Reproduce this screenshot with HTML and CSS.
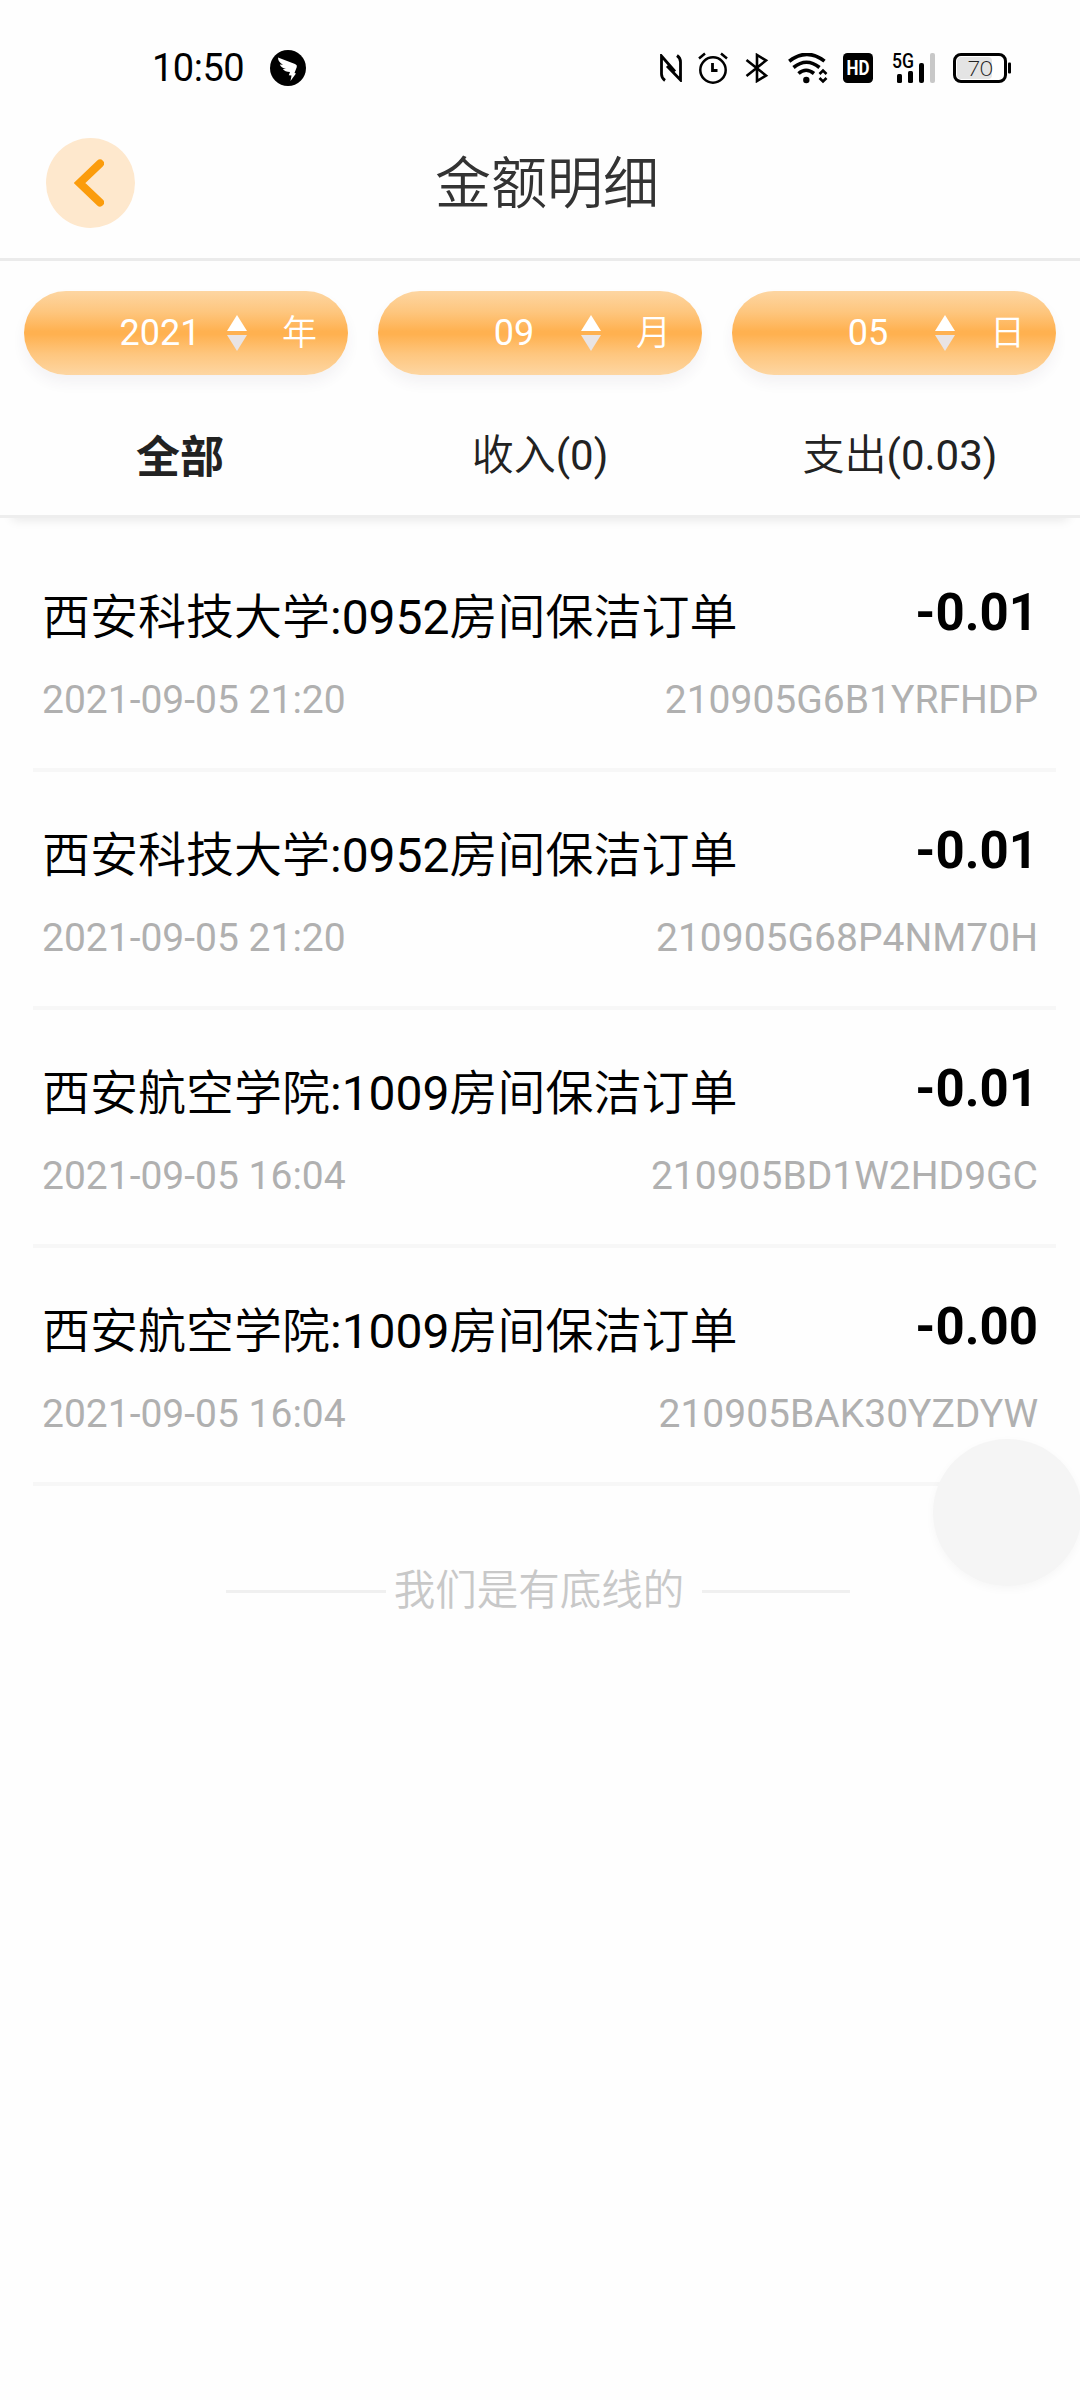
FILE: index.html
```html
<!DOCTYPE html>
<html lang="zh-CN">
<head>
<meta charset="utf-8">
<title>金额明细</title>
<link rel="stylesheet" href="styles.css">
</head>
<body>
<div class="status">
  <div class="status-left">
    <span class="clock">10:50</span>
    <svg class="app-badge" viewBox="0 0 36 36"><circle cx="18" cy="18" r="18"/><path fill="#fff" d="M8 7.500L25 14Q27.500 15 26.800 17L24.500 23L26 23.500L20.500 31L21.500 25.500L18.800 25.200L20 22Q15 22 12.800 19L16 19Q11 17.500 9.800 14.500L13 14.800Q8 12 8 7.500Z"/></svg>
  </div>
  <div class="status-right">
    <svg class="nfc" viewBox="0 0 22 28" fill="none" stroke="#000" stroke-width="2.800"><path d="M5 26.500Q1.500 24 1.500 20V2L15 17.500M17 1.500Q20.500 4 20.500 8V26L7 12"/></svg>
    <svg class="alarm" viewBox="0 0 30 32" fill="none" stroke="#000" stroke-width="2.500"><circle cx="15" cy="18" r="12.700"/><path d="M1 6.500L7 1.500M23 1.500L29 6.500"/><path stroke-width="2.800" d="M14.500 11V18.500H19.500"/></svg>
    <svg class="bt" viewBox="0 0 24 30" fill="none" stroke="#000" stroke-width="2.600"><path d="M1.500 7L21 22.500L12 28V2L21 7.500L1.500 23"/></svg>
    <svg class="wifi" viewBox="0 0 40 31" fill="none" stroke="#000" stroke-width="3.600"><path d="M1.200 8.200Q19 -5.500 36.500 8.200M5.500 14.500Q18.500 4 31.500 14.500M10.500 20.500Q18 14 26 20.500"/><circle cx="18.300" cy="27" r="3.200" fill="#000" stroke="none"/><path stroke-width="2.600" d="M31.500 21L35 17.500L38.500 21M31.500 25L35 28.500L38.500 25"/></svg>
    <svg class="hd" viewBox="0 0 30 30"><rect width="30" height="30" rx="4.500"/><text x="15" y="22" text-anchor="middle" textLength="23" lengthAdjust="spacingAndGlyphs">HD</text></svg>
    <svg class="signal" viewBox="0 0 44 31"><text x="0" y="14.500" textLength="22" lengthAdjust="spacingAndGlyphs">5G</text><rect x="5" y="21" width="5" height="9" rx="1.500"/><rect x="16" y="18" width="5" height="12" rx="1.500"/><rect x="27" y="10" width="5" height="20" rx="2"/><rect x="38" y="0" width="5" height="30" rx="2" fill="#c8c8c8"/></svg>
    <svg class="battery" viewBox="0 0 59 30"><rect x="1.500" y="1.500" width="51" height="27" rx="6.500" fill="#fff" stroke="#000" stroke-width="3"/><rect x="4" y="4" width="35" height="22" rx="4" fill="#e4e4e4"/><rect x="55" y="9.500" width="3" height="11" rx="1"/><text x="27" y="22.500" text-anchor="middle">70</text></svg>
  </div>
</div>
<header class="header">
  <div class="back"><svg viewBox="0 0 30 48" fill="none" stroke="#fb9c0c" stroke-width="8" stroke-linecap="round" stroke-linejoin="miter"><path d="M26 4.500L5.500 24L26 43.500"/></svg></div>
  <h1>金额明细</h1>
</header>
<section class="filters">
  <div class="pills">
    <div class="pill"><span class="value">2021</span><svg viewBox="0 0 20 36"><path fill="#fff" d="M10 0L20 16H0Z"/><path fill="#e9e4e4" d="M0 20H20L10 36Z"/></svg><span class="unit">年</span></div>
    <div class="pill"><span class="value">09</span><svg viewBox="0 0 20 36"><path fill="#fff" d="M10 0L20 16H0Z"/><path fill="#e9e4e4" d="M0 20H20L10 36Z"/></svg><span class="unit">月</span></div>
    <div class="pill"><span class="value">05</span><svg viewBox="0 0 20 36"><path fill="#fff" d="M10 0L20 16H0Z"/><path fill="#e9e4e4" d="M0 20H20L10 36Z"/></svg><span class="unit">日</span></div>
  </div>
  <nav class="tabs"><span class="tab active">全部</span><span class="tab">收入<span class="num">(0)</span></span><span class="tab">支出<span class="num">(0.03)</span></span></nav>
</section>
<main class="list">
  <article class="row"><div class="line"><span class="name">西安科技大学<span class="num">:0952</span>房间保洁订单</span><b class="amount">-0.01</b></div><div class="line meta"><span>2021-09-05 21:20</span><span>210905G6B1YRFHDP</span></div></article>
  <article class="row"><div class="line"><span class="name">西安科技大学<span class="num">:0952</span>房间保洁订单</span><b class="amount">-0.01</b></div><div class="line meta"><span>2021-09-05 21:20</span><span>210905G68P4NM70H</span></div></article>
  <article class="row"><div class="line"><span class="name">西安航空学院<span class="num">:1009</span>房间保洁订单</span><b class="amount">-0.01</b></div><div class="line meta"><span>2021-09-05 16:04</span><span>210905BD1W2HD9GC</span></div></article>
  <article class="row"><div class="line"><span class="name">西安航空学院<span class="num">:1009</span>房间保洁订单</span><b class="amount">-0.00</b></div><div class="line meta"><span>2021-09-05 16:04</span><span>210905BAK30YZDYW</span></div></article>
</main>
<footer class="end"><i class="rule"></i><span>我们是有底线的</span><i class="rule rule-right"></i></footer>
<div class="float-ball"></div>
</body>
</html>
```
FILE: styles.css
```css
* { box-sizing: border-box; }
body {
  margin: 0;
  width: 1080px;
  height: 2400px;
  position: relative;
  overflow: hidden;
  background: #fefefe;
  font-family: Roboto, "Noto Sans CJK SC", sans-serif;
  color: #000;
}
svg { display: block; flex: none; }

.status { height: 120px; padding: 16px 68px 0 152px; display: flex; justify-content: space-between; align-items: center; }
.status-left, .status-right { display: flex; align-items: center; }
.clock { font-size: 38px; line-height: 44px; width: 118px; letter-spacing: -0.5px; }
.app-badge { width: 36px; height: 36px; }
.nfc { width: 22px; height: 28px; margin-right: 16px; }
.alarm { width: 30px; height: 32px; margin-right: 17px; }
.bt { width: 24px; height: 30px; margin-right: 19px; }
.wifi { width: 40px; height: 31px; margin-right: 15px; }
.hd { width: 30px; height: 30px; margin-right: 19px; overflow: visible; }
.hd text { font-size: 20px; font-weight: 700; fill: #fff; }
.signal { width: 44px; height: 31px; margin-right: 17px; overflow: visible; }
.signal text { font-size: 20px; font-weight: 500; }
.battery { width: 59px; height: 30px; }
.battery text { font-family: Lato, sans-serif; font-weight: 300; font-size: 22px; fill: #222; }

.header { height: 141px; border-bottom: 3px solid #ebebeb; padding: 0 46px; display: grid; grid-template-columns: 89px 1fr 75px; align-items: start; }
.back { width: 89px; height: 90px; margin-top: 18px; border-radius: 50%; background: #fee8cd; display: flex; align-items: center; justify-content: center; }
.back svg { width: 30px; height: 48px; margin-right: 4px; }
.header h1 { margin: 23px 0 0; text-align: center; font-size: 56px; line-height: 82px; font-weight: 350; color: #333; }

.filters { height: 257px; padding-top: 30px; border-bottom: 3px solid #eeeeee; box-shadow: 0 14px 10px -12px #e8e8e8; }
.pills { display: flex; gap: 30px; padding: 0 24px; }
.pill { width: 324px; height: 84px; border-radius: 42px; padding: 0 24px 0 69px; display: grid; grid-template-columns: 134px 20px 1fr; align-items: center; color: #fff; font-size: 36px; line-height: 42px; background: linear-gradient(#fdd6a2, #fec67e 25%, #ffb150 48%, #ffb150 52%, #fec67e 75%, #fdd6a2); box-shadow: 0 8px 14px rgba(70, 50, 90, .06); }
.value { text-align: center; font-weight: 400; }
.pill svg { width: 20px; height: 36px; }
.unit { font-size: 35px; font-weight: 350; text-align: right; padding: 2px 7px 0 0; }
.tabs { height: 138px; display: grid; grid-template-columns: repeat(3, 1fr); align-items: center; padding-top: 23px; text-align: center; color: #222; }
.tab { font-size: 42px; line-height: 60px; font-weight: 350; }
.tab.active { font-size: 44px; font-weight: 700; padding-top: 5px; }
.num { font-weight: 400; }

.list { padding: 16px 24px 0 33px; }
.row { height: 238px; padding: 49px 18px 0 9px; border-bottom: 4px solid #f7f7f7; }
.line { display: flex; justify-content: space-between; height: 70px; align-items: center; }
.name { font-size: 48px; line-height: 70px; font-weight: 350; }
.amount { font-size: 51px; line-height: 60px; margin-top: -10px; }
.meta { color: #b0b0b0; font-size: 39px; height: 46px; margin-top: 24px; }
.end { margin: 72px 4px 0 0; display: flex; align-items: center; justify-content: center; color: #c8c8c8; font-size: 41.5px; line-height: 66px; }
.end span { margin: 0 18px 0 8px; font-weight: 350; }
.rule { height: 3px; width: 160px; background: #f0f0f0; }
.rule-right { width: 148px; }
.float-ball { position: absolute; left: 933px; top: 1439px; width: 149px; height: 147px; border-radius: 50%; background: #f5f5f5; box-shadow: 0 3px 10px rgba(0, 0, 0, .035); }
```
